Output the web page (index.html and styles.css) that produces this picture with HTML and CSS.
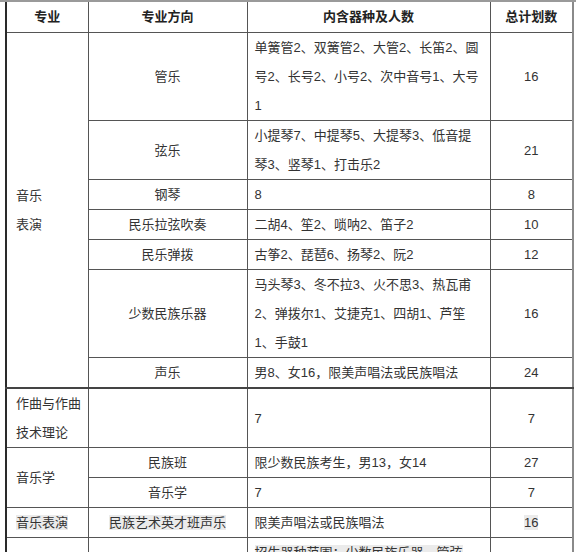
FILE: index.html
```html
<!DOCTYPE html>
<html lang="zh">
<head>
<meta charset="utf-8">
<link rel="stylesheet" href="styles.css">
<title>招生计划</title>
</head>
<body>
<div class="wrap">
<table class="plan">
<colgroup><col class="c1"><col class="c2"><col class="c3"><col class="c4"></colgroup>
<thead>
<tr><th>专业</th><th>专业方向</th><th>内含器种及人数</th><th>总计划数</th></tr>
</thead>
<tbody>
<tr><td class="major" rowspan="7">音乐<br>表演</td><td class="dir">管乐</td><td class="txt">单簧管2、双簧管2、大管2、长笛2、圆号2、长号2、小号2、次中音号1、大号1</td><td class="num">16</td></tr>
<tr><td class="dir">弦乐</td><td class="txt">小提琴7、中提琴5、大提琴3、低音提琴3、竖琴1、打击乐2</td><td class="num">21</td></tr>
<tr><td class="dir">钢琴</td><td class="txt">8</td><td class="num">8</td></tr>
<tr><td class="dir">民乐拉弦吹奏</td><td class="txt">二胡4、笙2、唢呐2、笛子2</td><td class="num">10</td></tr>
<tr><td class="dir">民乐弹拨</td><td class="txt">古筝2、琵琶6、扬琴2、阮2</td><td class="num">12</td></tr>
<tr><td class="dir">少数民族乐器</td><td class="txt">马头琴3、冬不拉3、火不思3、热瓦甫2、弹拨尔1、艾捷克1、四胡1、芦笙1、手鼓1</td><td class="num">16</td></tr>
<tr><td class="dir">声乐</td><td class="txt">男8、女16，限美声唱法或民族唱法</td><td class="num">24</td></tr>
<tr class="sep"><td class="major">作曲与作曲<br>技术理论</td><td class="dir"></td><td class="txt">7</td><td class="num">7</td></tr>
<tr><td class="major" rowspan="2">音乐学</td><td class="dir">民族班</td><td class="txt">限少数民族考生，男13，女14</td><td class="num">27</td></tr>
<tr><td class="dir">音乐学</td><td class="txt">7</td><td class="num">7</td></tr>
<tr><td class="major"><span class="hl">音乐表演</span></td><td class="dir"><span class="hl">民族艺术英才班声乐</span></td><td class="txt">限美声唱法或民族唱法</td><td class="num"><span class="hl">16</span></td></tr>
<tr><td class="major"></td><td class="dir"></td><td class="txt"><span class="hl">招生器种范围：少数民族乐器、管弦</span><br><span class="hl">乐器、声乐</span></td><td class="num"></td></tr>
</tbody>
</table>
</div>
</body>
</html>
```
FILE: styles.css
```css
html, body {
  margin: 0;
  padding: 0;
  background: #ffffff;
}

.wrap {
  padding-left: 5px;
  border-top: 2px solid #9a9a9a;
}

.plan {
  border-collapse: collapse;
  table-layout: fixed;
  width: 567px;
  font-family: "Liberation Sans", "Noto Sans CJK SC", sans-serif;
  font-size: 13px;
  color: #333333;
  border-left: 2px solid #2a2a2a;
  border-right: 2px solid #8a8a8a;
}

.c1 { width: 82px; }
.c2 { width: 159px; }
.c3 { width: 243px; }
.c4 { width: 83px; }

.plan th,
.plan td {
  border: 1px solid #555555;
  padding: 0 7px;
  line-height: 29px;
  vertical-align: middle;
}

.plan thead th {
  border-top: none;
  line-height: 30px;
  font-weight: bold;
  color: #222222;
  text-align: center;
}

.plan .major {
  text-align: left;
  padding: 0 1px 0 9px;
  border-left: none;
}

.plan .dir { text-align: center; }
.plan .txt { text-align: left; }
.plan .num { text-align: center; border-right: none; }
.plan th:first-child { border-left: none; }
.plan th:last-child { border-right: none; }

.plan .sep td { border-top: 2px solid #444444; }

.hl {
  background: #ebebeb;
}
```
